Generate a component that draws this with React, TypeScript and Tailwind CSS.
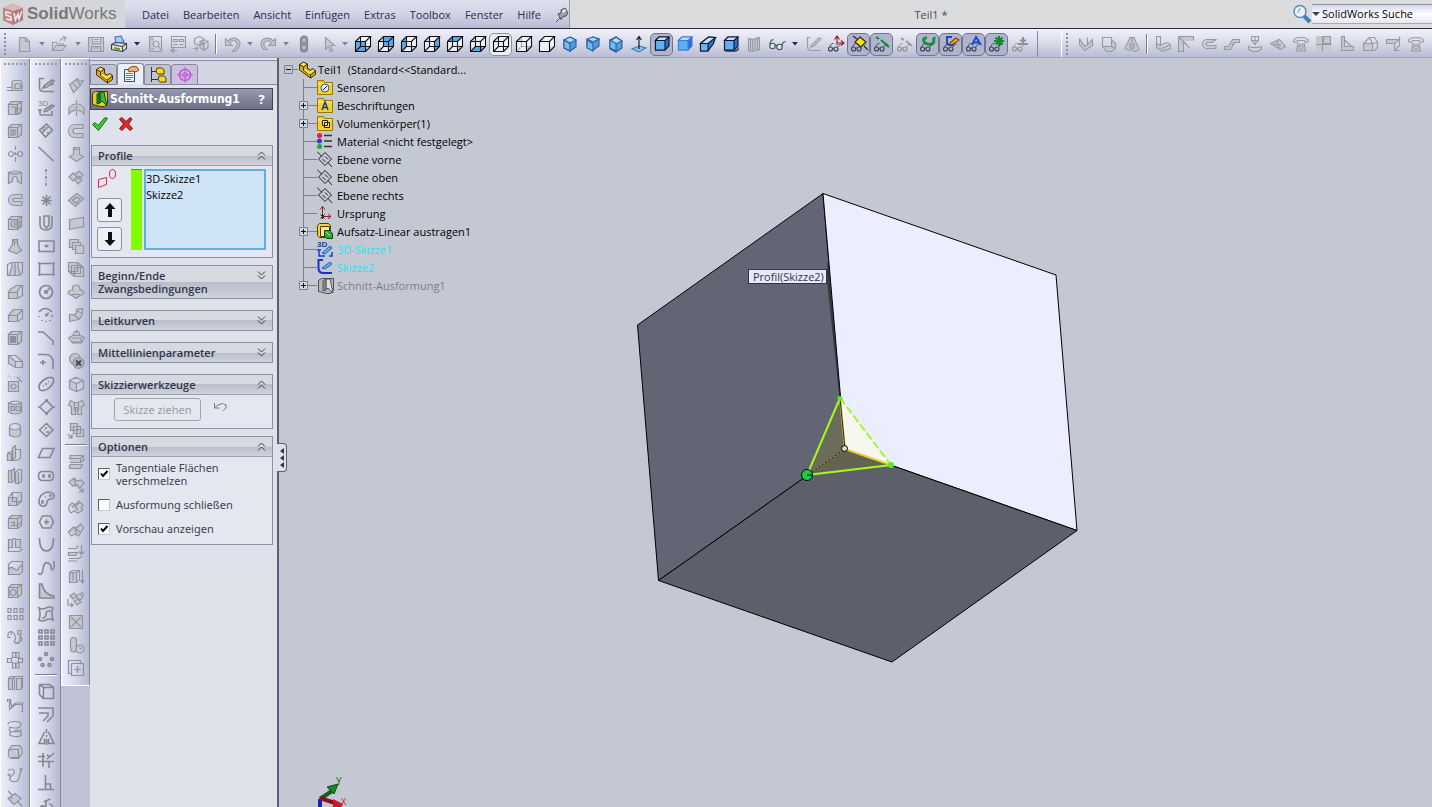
import { useState } from "react";
import type { ReactNode } from "react";
import clsx from "clsx";

type Tool = {
  label: string;
  icon?: ReactNode;
  line?: string;
  fill?: string;
  menu?: boolean;
  active?: boolean;
  framed?: boolean;
  enabled?: boolean;
};

type Item = Tool | "sep";

const BOX = "M2.5 5.5h9v10h-9zM2.5 5.5l3-3h10l-4 3M15.5 2.5v10l-4 3";
const BOX_FILL = "M2.5 5.5l3-3h10v10l-4 3h-9z";

function Glyph({ line, fill }: { line?: string; fill?: string }) {
  return (
    <svg viewBox="0 0 18 18" className="size-[18px] shrink-0" fill="none" stroke="currentColor" aria-hidden="true">
      {fill && <path d={fill} fill="#c6c8cf" stroke="none" />}
      {line && <path d={line} />}
    </svg>
  );
}

function Svg({ children }: { children: ReactNode }) {
  return (
    <svg viewBox="0 0 18 18" className="size-[18px] shrink-0" fill="none" stroke="currentColor" aria-hidden="true">
      {children}
    </svg>
  );
}

/* Wireframe cube, one face tinted */
function Wire({ face, hidden = "solid" }: { face?: string; hidden?: "solid" | "dash" | "none" }) {
  return (
    <Svg>
      <path d="M6.5 1.5h10v10h-10z" fill="#f4f5fc" stroke="none" />
      <path d="M1.5 6.5h10v10h-10z" fill="#eceef8" stroke="none" />
      {face && <path d={face} fill="#58aae8" stroke="none" />}
      {hidden !== "none" && (
        <path
          d="M6.5 1.5v10h10M6.5 11.5l-5 5"
          stroke={hidden === "dash" ? "#777" : "#111"}
          strokeDasharray={hidden === "dash" ? "1 1" : undefined}
        />
      )}
      <path d="M1.5 6.5h10v10h-10zM1.5 6.5l5-5h10l-5 5M16.5 1.5v10l-5 5" stroke="#111" />
    </Svg>
  );
}

function Iso({ tilt = 0 }: { tilt?: number }) {
  return (
    <Svg>
      <path d={`M9 2l6 ${3 - tilt}v7l-6 4-6-3V5z`} fill="#4f9ede" stroke="#2a5d9e" />
      <path d={`M9 2l6 ${3 - tilt}-6 3-6-3z`} fill="#a6daf7" stroke="#2a5d9e" />
      <path d="M9 8.5V16l-6-3V5z" fill="#78bcee" stroke="#2a5d9e" />
    </Svg>
  );
}

function Shaded({ edge, shadow }: { edge: string; shadow?: boolean }) {
  return (
    <Svg>
      {shadow && <path d="M2 15h11l4-3v3l-3 2H4z" fill="#555a70" stroke="none" />}
      <path d="M2.5 5.5L6 2h10v9l-4 4H2.5z" fill="#2f6fce" stroke={edge} />
      <path d="M2.5 5.5H12V15H2.5z" fill="#5fb0f2" stroke={edge} />
      <path d="M2.5 5.5L6 2h10l-4 3.5z" fill="#bfe4fb" stroke={edge} />
    </Svg>
  );
}

function Specs({ children, muted }: { children?: ReactNode; muted?: boolean }) {
  return (
    <Svg>
      {children}
      <g stroke={muted ? "#8d909c" : "#35454f"}>
        <circle cx="3.5" cy="14" r="2" />
        <circle cx="9" cy="14" r="2" />
        <path d="M5.5 13.5q.8-.8 1.500 0M2 12.500l3-4h1.500M10.500 12.500l2.500-3.500h1.500" strokeWidth=".9" />
      </g>
    </Svg>
  );
}

const standardTools: Item[] = [
  { label: "Neu", menu: true, line: "M4.5 2.5h6l4 4v10h-10zM10.5 2.5v4h4", fill: "M5 3h5l4 4v9H5z" },
  { label: "Öffnen", menu: true, line: "M1.5 15.5v-8h4l1 1.5h6v2M1.5 15.5l3.500-5h10l-3.500 5zM9 6q1-3 5-3M12 1l3 2-2 3", fill: "M2 15l3-4h9l-3 4z" },
  { label: "Speichern", line: "M1.5 2.5h15v14h-15zM5.5 2.5v6h8v-6M4.5 16.5v-5h9v5M7 13h5M7 4.5h5M7 6.5h5", fill: "M2 3h3v5h8V3h3v13H2z" },
  {
    label: "Drucken",
    menu: true,
    enabled: true,
    icon: (
      <Svg>
        <path d="M5 2l6-1 3 6-8 2z" fill="#9fd0f4" stroke="#3672b8" />
        <path d="M1.5 9.5l4-2 11 1v5l-4 3-11-2z" fill="#e2e2da" stroke="#3f4148" />
        <path d="M1.5 9.5l11 2 4-3M12.5 11.5v5" stroke="#3f4148" />
        <path d="M4 13l6 1.2" stroke="#6b9b38" strokeWidth="2" />
      </Svg>
    ),
  },
  { label: "Seitenansicht", line: "M3.5 1.5h12v15h-12zM10 6a3 3 0 1 0 .1 0M12 11l3 3.500M5 4h2M5 14h3", fill: "M4 2h4v14H4z" },
  { label: "Zeichnung aus Teil", line: "M2.5 1.5h14v11h-14zM4.5 4.5h4v2h-4zM10.5 4.5h4v2h-4zM4.5 9.5h4M10.5 9.5h4M2 15.5h6M5 13l-3 2.500L5 18" },
  { label: "Baugruppe aus Teil", line: "M2.5 3.5l5-2 4 2v5l-4 2-5-2zM8 6.5l4-2 4 2v6l-4 3-4-3zM8 6.5l4 2 4-2M12 8.5v7M1 13.5h5M4 11.5l2 2-2 3", fill: "M8 7l4 2v6l-4-3z" },
  "sep",
  { label: "Rückgängig", menu: true, line: "M2.500 4v6.500H9l-2.500-2.500Q9 5 12 6q4 2 1 6l-3.500 4.500h3L16 12q3-6-3-8.500Q8 2 5 6z", fill: "M2.500 4v6.500H9l-2.500-2.500Q9 5 12 6q4 2 1 6l-3.500 4.500h3L16 12q3-6-3-8.500Q8 2 5 6z" },
  { label: "Wiederherstellen", menu: true, line: "M16.500 4v6.500H10l2.500-2.500Q10 5 7 6q-4 2-1 6l2 2.500h-3L3 12q-3-6 3-8.500Q11 2 14 6z", fill: "M16.500 4v6.500H10l2.500-2.500Q10 5 7 6q-4 2-1 6l2 2.500h-3L3 12q-3-6 3-8.500Q11 2 14 6z" },
  {
    label: "Modellneuaufbau",
    icon: (
      <Svg>
        <rect x="5.500" y="1" width="7" height="16" rx="3.500" fill="#8f92a0" stroke="#80838f" />
        <circle cx="9" cy="5" r="1.700" fill="#b9bcc6" stroke="none" />
        <circle cx="9" cy="12.500" r="1.700" fill="#b9bcc6" stroke="none" />
      </Svg>
    ),
  },
  { label: "Auswählen", menu: true, line: "M7.5 2.5v12l3-3 2 5 2-1-2-5h4z", fill: "M8 4v9l3-2h4z" },
  { label: "Vorderseite", enabled: true, icon: <Wire face="M1.5 6.5h10v10h-10z" /> },
  { label: "Rückseite", enabled: true, icon: <Wire face="M6.5 1.5h10v10h-10z" /> },
  { label: "Links", enabled: true, icon: <Wire face="M1.5 6.5l5-5v10l-5 5z" /> },
  { label: "Rechts", enabled: true, icon: <Wire face="M11.5 6.5l5-5v10l-5 5z" /> },
  { label: "Oben", enabled: true, icon: <Wire face="M1.5 6.5l5-5h10l-5 5z" /> },
  { label: "Unten", enabled: true, icon: <Wire face="M1.5 16.5l5-5h10l-5 5z" /> },
  { label: "Drahtdarstellung", framed: true, enabled: true, icon: <Wire /> },
  { label: "Verdeckte Kanten sichtbar", enabled: true, icon: <Wire hidden="dash" /> },
  { label: "Verdeckte Kanten ausgeblendet", enabled: true, icon: <Wire hidden="none" /> },
  { label: "Isometrisch", enabled: true, icon: <Iso /> },
  { label: "Trimetrisch", enabled: true, icon: <Iso tilt={1} /> },
  { label: "Dimetrisch", enabled: true, icon: <Iso tilt={-1} /> },
  {
    label: "Normal auf",
    enabled: true,
    icon: (
      <Svg>
        <path d="M2 14l7-3 7 2-7 4z" fill="#86c3ea" stroke="#3d7ab5" />
        <path d="M9 14V2M6.5 5L9 1.5 11.5 5" stroke="#111" />
      </Svg>
    ),
  },
  { label: "Schattiert mit Kanten", active: true, enabled: true, icon: <Shaded edge="#0d1530" /> },
  { label: "Schattiert", enabled: true, icon: <Shaded edge="#3c78dc" /> },
  {
    label: "Perspektive",
    enabled: true,
    icon: (
      <Svg>
        <path d="M1.5 8.5l8-6.5 7 .5-2 6L9 16H1.5z" fill="#2f6fce" stroke="#0d1530" />
        <path d="M1.5 8.5H9V16H1.5z" fill="#6db6f3" stroke="#0d1530" />
        <path d="M1.5 8.5L9.5 2l7 .5L9 8.5z" fill="#bfe4fb" stroke="#0d1530" />
      </Svg>
    ),
  },
  { label: "Schatten", enabled: true, icon: <Shaded edge="#0d1530" shadow /> },
  { label: "Schnittansicht", line: "M3.5 3.5l4 1v12l-4-1zM7.5 4.5l7-2v12l-7 2M10 4v11M12.5 3.5v11M5.5 4v12", fill: "M3 3l5 1 6-2v12l-6 2-5-1z" },
  {
    label: "Einblenden/Ausblenden",
    menu: true,
    enabled: true,
    icon: (
      <Svg>
        <g stroke="#45535c">
          <circle cx="4.5" cy="11" r="2.700" fill="#dfe9ee" />
          <circle cx="11.5" cy="12" r="2.700" fill="#dfe9ee" />
          <path d="M7 10.500q1-.5 2 .5M2 10q0-5 3.500-5.500M14 11q0-4 3.500-4.500" />
        </g>
      </Svg>
    ),
  },
  { label: "Skizze", line: "M6 2.5H3.5v9q0 4 4 4H17M8 10l7-7 2 1-7 7-3 1z" },
  {
    label: "Ursprünge",
    enabled: true,
    icon: (
      <Specs>
        <path d="M10 10V2M7.5 4.5L10 1l2.500 3.500M10 8h7M14 5.5L17 8l-3 2.500" stroke="#9e1422" />
      </Specs>
    ),
  },
  {
    label: "Ebenen",
    active: true,
    enabled: true,
    icon: (
      <Specs>
        <path d="M10 2l6 5-5 5-6-5z" fill="#ffe600" stroke="#222" />
        <path d="M3 1l4 3M14 11l4 4" stroke="#222" />
      </Specs>
    ),
  },
  { label: "Achsen", active: true, enabled: true, icon: <Specs><path d="M3 2l3 2M8 5l8 7" stroke="#12882d" strokeWidth="2" /></Specs> },
  { label: "Temporäre Achsen", icon: <Specs muted><path d="M5 3l3 2M10 6l6 5" stroke="#999" strokeWidth="2" /></Specs> },
  { label: "Kurven", active: true, enabled: true, icon: <Specs><path d="M8 3q-5 0-3 3.500t7 2.500q4-1 2.500-4 0-2 2-2" stroke="#17963a" strokeWidth="3" /></Specs> },
  {
    label: "Skizzen",
    active: true,
    enabled: true,
    icon: (
      <Specs>
        <path d="M10 2H5v6q0 2 3 2h4" stroke="#1b48d8" strokeWidth="2" />
        <path d="M8 8l6-5 3 2-6 4-3 1z" fill="#ffb21f" stroke="#7a3c10" />
      </Specs>
    ),
  },
  { label: "Beschriftungen", active: true, enabled: true, icon: <Specs><path d="M7 10l4-8 5 8M9 7.5h6" stroke="#1b48d8" strokeWidth="2" /></Specs> },
  { label: "Punkte", active: true, enabled: true, icon: <Specs><path d="M11 1v10M6 6h10M7.5 2.5l7 7M14.5 2.5l-7 7" stroke="#0b8f22" strokeWidth="2" /></Specs> },
  { label: "Beziehungen", icon: <Specs muted><path d="M7 9h10M12 9V2M9 5.5h6" stroke="#8d909c" strokeWidth="2" /></Specs> },
];

const sheetTools: Item[] = [
  { label: "Basisblech", line: "M2.5 3.5l5 8 3-2V2.5M2.5 3.5v6l5 6 8-5v-6l-5 5", fill: "M3 4l5 8 7-6v5l-7 5-5-6z" },
  { label: "In Blech umwandeln", line: "M2.5 2.5h9v9h-9zM11.5 4.5l4 4v5l-4 3h-5l-4-5M11.5 11.5l4 2", fill: "M3 12h8V5l4 4v4l-4 3H7z" },
  { label: "Übergangslasche", line: "M7 2.5h4l5 12-4 2-3-2-3 1-4-2zM9 2.5v12M7 8v6M11 8v6", fill: "M7 3h4l4 11H3z" },
  "sep",
  { label: "Kante-Lasche", line: "M2.5 1.5h4v9l-4-2zM2.5 8.5v4l6 4 8-3v-4l-4-2-6 3M7 14l8-4", fill: "M3 9l5 3 8-2v3l-8 3-5-3z" },
  { label: "Gehrung", line: "M1.5 1.5h15v4M1.5 1.5v15h5V7l6 6M1.5 1.5l9 9", fill: "M2 2h14v4H6v10H2z" },
  { label: "Saum", line: "M16 4.5H7a4 4 0 0 0 0 9h9v-3H7.5a1 1 0 0 1 0-3H12l4-3z", fill: "M7 5h9l-4 3H7v2h9v3H7q-5-4 0-8z" },
  { label: "Absatz", line: "M1.5 14.5h6l4-7h5v-3h-7l-4 7h-4zM9 10l3-3", fill: "M2 12h4l3-7h7v2h-5l-4 7H2z" },
  { label: "Skizzierte Biegung", line: "M5.5 1.5h7v4L9 9.5 5.5 5.5zM9 1v8M2.5 11.5l4 1h5l4-1v3l-4 2h-5l-4-2zM5.5 5.5h7" },
  { label: "Eckbehandlung", line: "M1.5 8.5l9-4 6 7-5 3zM4 9l8 1M8 6l2 7", fill: "M2 9l9-4 5 6-5 3z" },
  { label: "Umformen", line: "M1.500 6.5q0-4 7.500-4t7.500 4l-3 1-1-2h-7l-1 2zM6 8l-1.500 8h9L12 8M9 10a2 2 0 1 0 .1 0", fill: "M4 15l2-7h6l2 8z" },
  { label: "Entfaltet", line: "M7.500 1.5v15M1.5 9.5h15M8.5 1.5h7v7h-7z", fill: "M1 1h15v15H1z" },
  { label: "Verstärkung", line: "M3.5 1.5h3v10h9v4h-12zM6.5 5l7 6.500", fill: "M4 2h2v9h9v4H4z" },
  { label: "Falten", line: "M2.5 8.5l6-6h5l3 5v5l-3 3h-11zM2.5 8.5h9l5-1M8.5 2.5l3 6v7", fill: "M3 9h8v6H3z" },
  { label: "Abwickeln", line: "M2.5 4.5h13l-5 4h-8zM10.5 8.5v7l5-5v-9M10.5 15.5h5", fill: "M3 5h12l-5 3H3z" },
  { label: "Entlüftung", line: "M1.500 6.5q0-4 7.500-4t7.500 4l-3 1-1-2h-7l-1 2zM6 8l-1.500 8h9L12 8M9 10a2 2 0 1 0 .1 0", fill: "M4 15l2-7h6l2 8z" },
];

const featureTools: Item[] = [
  { label: "Linear ausgetragener Aufsatz", line: "M6 14.5v-7q0-3 3-3h4q3 0 3 3v7zM1 11.5h5M1 14.5h5M9 11.5q-1-4 3-4t2 5h-5z", fill: "M7 14V7q3-3 8 0v7z" },
  { label: "Linear ausgetragener Schnitt", line: BOX + "M5 8h5v5M9.5 9.5h5v5h-5z", fill: BOX_FILL },
  { label: "Schnitt", line: BOX + "M5 8h4v5H5zM7 8v5", fill: BOX_FILL },
  { label: "Rotierter Aufsatz", line: "M9.5 1v4M9.5 7v3M9.5 12v5M5 6.5a2.500 2.500 0 1 0 .1 0M14 6.5a2.500 2.500 0 1 0 .1 0M7 9h5" },
  { label: "Rotierter Schnitt", line: "M2.5 4.5q7-3 13 0v11l-4-2q0-5-2.500-5t-2.500 5l-4 2zM2.5 4.5q6 3 13 0", fill: "M3 5q7-3 12 0v10l-4-2q-2-9-4 0l-4 2z" },
  { label: "Ausgetragener Aufsatz", line: "M16 3.5H8a5.500 5.500 0 0 0 0 11h8v-4H8.5a1.500 1.500 0 0 1 0-3H16z", fill: "M8 4h8v3H8v4h8v3H8Q-1 9 8 4z" },
  { label: "Ausgetragener Schnitt", line: BOX + "M14 7H8a3 3 0 0 0 0 6h6v-2H9q-2-1 0-2h5z", fill: BOX_FILL },
  { label: "Aufsatz ausformen", line: "M6.5 2.5h5v5l4 6-5 3-8-3 4-6zM6.5 2.5l2 2h3M8.5 4.5v4", fill: "M7 3h4v5l4 6-5 2-7-3 4-5z" },
  { label: "Schnitt ausformen", line: "M1.5 4.5l4-2h11v10l-3 3h-12zM6 3v4l-3 8M12 3v4l2 8M9 3v12", fill: "M9 3l3 4 1 8H2l4-8z" },
  { label: "Verrundung", line: "M2.5 15.5v-6q1-4 5-5l3-2h6v10l-5 3zM11.5 15.5v-6h-9M11.5 9.5q0-4 5-7", fill: "M3 9q1-6 13-6l-5 6v6H3z" },
  { label: "Fase", line: "M2.5 15.5v-6l5-6h9v9l-5 3zM11.5 15.5v-6h-9M11.5 9.5l5-6", fill: "M3 9l5-5h8l-5 5v6H3z" },
  {
    label: "Wandung",
    icon: (
      <Svg>
        <path d={BOX_FILL} fill="#c6c8cf" />
        <path d={BOX} />
        <path d="M4.5 7.5h5v6h-5z" fill="#8d9099" />
      </Svg>
    ),
  },
  { label: "Formschräge", line: "M2.5 3.5h7l7 6v6h-7l-7-4zM2.5 3.5l7 6h7M9.5 9.5v6", fill: "M3 4l7 6v5l-7-4z" },
  { label: "Bohrungsassistent", line: "M2.5 6.5h10v10h-10zM7.5 9a2.500 2.500 0 1 0 .1 0M11 2l5 5M4 3h1M8 2h1M14 2h1M2 1h1", fill: "M3 7h9v9H3z" },
  { label: "Wickeln", line: "M2.5 5q7-4 13 0v9q-6 4-13 0zM2.5 5q7 3 13 0M5 8.5h3v4H5zM10 8.5h4v4h-4z", fill: "M3 5q6 3 12 0v9q-6 3-12 0z" },
  { label: "Kuppel", line: "M3.5 7q0-4.500 5.500-4.500t5.500 4.500v7q-5.500 4-11 0zM3.5 7q5.500 4 11 0", fill: "M4 8q5 3 10 0v6q-5 3-10 0z" },
  { label: "Rippe", line: "M1.5 9.5h4v7h-4zM6.5 3.5l3-2v12l-3 3zM9.5 5.5h5v9l-4 2h-4M1.5 9.5l3-2h2", fill: "M7 4l3-2v11l-3 3zM2 10h3v6H2z" },
  { label: "Verschieben", line: "M2.5 3.5h3v12h-3zM5.5 3.5l3-2v12l-3 2M9.5 5.5l3-3h3v12l-3 2h-3zM12.5 5.5v11", fill: "M3 4l5-2v11l-5 2zM10 6h3v10h-3z" },
  { label: "Kombinieren", line: "M2.5 7.5h8v8h-8zM6.5 2.5h9v9h-9zM2.5 7.5l4-5M10.5 15.5l5-4", fill: "M3 8h8V3h4v8l-5 5H3z" },
  { label: "Einzug", line: BOX + "M5 9.5h4M5 12.5h6l4-3M8 8v5", fill: BOX_FILL },
  { label: "Biegen", line: "M2.5 3.5h4v8h-4zM9.5 3.5h5v8h-5zM2.5 11.5v4h11l3-3M6.5 3.5l1-1h2", fill: "M3 4h3v8H3zM10 4h4v8h-4z" },
  { label: "Trennen", line: "M2.5 5.5l3-3h11v10l-3 3h-11zM2.5 10q3-3 6 0t5-2l3-2", fill: "M3 10q3-2 6 0t7-3v5l-3 3H3z" },
  { label: "Vertiefung", line: BOX + "M7 7.5a3 3 0 1 0 .1 0", fill: BOX_FILL },
  { label: "Lineares Muster", line: "M2 3.5h3v4H2zM8 3.5h3v4H8zM14 3.5h3v4h-3zM2 10.5h3v4H2zM8 10.5h3v4H8zM14 10.5h3v4h-3z" },
  { label: "Kurvengesteuertes Muster", line: "M2 5.5q3-4 6 0t0 8M2 5.5v4h3M8 13.5q4 4 6 0V7M12 2.5h3v4h-3zM15 8.5q3 5-4 6M5 3v4" },
  { label: "Kreismuster", line: "M6.5 1.5h3v5h-3zM10 1.5h3v5h-3zM1.5 7.5h4v4h-4zM12.5 7.5h4v4h-4zM6.5 12h3v5h-3zM10 12h3v5h-3z" },
  { label: "Spiegeln", line: "M2.5 4.5h4v11h-4zM8.5 2.5v14M10.5 4.5h5v11h-5zM2.5 4.5l2-2h12v11l-2 2M6.5 4.5l2-2", fill: "M3 5h3v10H3zM11 5h4v10h-4z" },
  { label: "Zusammengesetzte Kurve", line: "M1.500 5V2.5h2v10l6-5h7v7M1.500 2.500h3l1 7 4-3.500h7v3M15 14.500h2" },
  { label: "Spirale", line: "M2 4.5q0-3 7-3t6 3.500-6 3-6-1M4 8q-3 4 5 4t6-3M5 12q-4 4 4 4.500t6-3.500-7-2" },
  { label: "Trennlinie", line: "M2.5 7.5l3-5h8q3 3 3 7l-4 6h-8l-2-3zM5.5 6.5h7v8h-7M2.5 7.5l3-1", fill: "M3 8l3-5h7l3 6-4 6H5z" },
  { label: "Kurve durch Punkte", line: "M2 4.5q5-3 6 0t-3 6 2 5q5 1 6-4t3-8M15 2.5a1 1 0 1 0 .1 0M3 8a1 1 0 1 0 .1 0" },
  { label: "Referenzebene", line: "M2 9.5l7-5 6 5-7 6zM2 2l4 4M12 13l4 4M4 9h3", fill: "M3 10l6-5 5 4-6 6z" },
];

const sketchTools: Item[] = [
  { label: "Skizze", line: "M7 2.5H2.5v9q0 4 4 4H17M7 10l8-6 2 1-7 6-4 1zM13 9l4-1" },
  {
    label: "3D-Skizze",
    icon: (
      <Svg>
        <text x="1" y="7" fontSize="8" fill="currentColor" stroke="none" className="font-[Liberation_Sans]">3D</text>
        <path d="M7 11l8-5 2 1-7 5-4 1M1 11h4M3 11v5M3 16h12v-4" />
      </Svg>
    ),
  },
  { label: "Intelligente Bemaßung", line: "M2.5 8l7-6 6 6-7 7zM5 11l7-7M5 6l2 2M10 10l2 2M7 4l1 2" },
  { label: "Linie", line: "M1.500 2l15 14" },
  { label: "Mittellinie", line: "M9 1v3M9 5.5v1M9 8v3M9 12.5v1M9 15v3" },
  { label: "Punkt", line: "M9.5 4v11M4 9.5h11M5.5 5.5l8 8M13.5 5.5l-8 8" },
  { label: "Offset", line: "M3 2v8q0 6 6 6t6-6V2M7 2h5v9l-2.500 3L7 11z" },
  { label: "Mittelpunkt-Rechteck", line: "M2 4h15v10.500H2zM8.5 8.5h2v1h-2z" },
  { label: "Eckpunkt-Rechteck", line: "M2.5 3.5h14v11h-14zM1 3h2M16 3h2M1 15h2M16 15h2" },
  { label: "Kreis", line: "M9 2.5a6.500 6.500 0 1 0 .1 0M9 9l4-4M8 8h2v2H8z" },
  { label: "Bogen", line: "M2 6q6-7 13 0M9 9l3-2M8 8.5h2v1H8M15 9v2M13 14v1M9 15v1M5 14v1M2 10v1" },
  { label: "Skizzenfase", line: "M1 3h5l10 9v4" },
  { label: "Skizzenverrundung", line: "M1 2.5h7q8 0 8 8V17M3 10.5h6M6 8v5" },
  { label: "Ellipse", line: "M3 15q-3-5 3-9.500t10-2.500q2 4-3 9t-10 3zM9 8v2M6 11h1M11 7h1" },
  { label: "Polygon", line: "M2.500 9l7-6.500L16 9l-6.500 6.500zM8 2h3M8 16h3M1 9h2M16 9h2" },
  { label: "3-Punkt-Rechteck", line: "M2.500 9l7-6.500L16 9l-6.500 6.500zM8 7h2M9 11h3M7 9h1" },
  { label: "Parallelogramm", line: "M5.5 4.5h11.500l-4 9H1.500z" },
  { label: "Langloch", line: "M5.5 4.5h7q4 0 4 4.500t-4 4.500h-7q-4 0-4-4.500t4-4.500zM6 8h1v2H6zM12 8h1v2h-1z" },
  { label: "Bogenlangloch", line: "M2 12Q2 4 10 2q6 0 7 3t-3 4q-4 0-4 4-1 4-5 3-3-1-3-4zM5 11h1v2H5zM8 7h1M13 5h1v1h-1z" },
  { label: "Sechseck", line: "M5.500 3h8l3 6-3 6h-8l-3-6zM7 9h5M9.5 6.5v5" },
  { label: "Parabel", line: "M2.5 2q0 13 7 13t7-13" },
  { label: "Spline", line: "M1 14q4 4 5-4t5-6 3 5q1 4 3 0V2" },
  { label: "Freiform", line: "M2.5 2v14H17v-2q-10-1-12-12z", fill: "M3 2h2q1 10 12 12v2H3z" },
  { label: "Spline auf Oberfläche", line: "M2 3q4 2 7 0t7 0q-2 5 0 12-4-2-7 0t-7 0q2-6 0-12zM5 13q4 0 4-4t5-3" },
  { label: "Lineares Skizzenmuster", line: "M2 2h3v3H2zM8 2h3v3H8zM14 2h3v3h-3zM2 8h3v3H2zM8 8h3v3H8zM14 8h3v3h-3zM2 14h3v3H2zM8 14h3v3H8zM14 14h3v3h-3z" },
  { label: "Kreisförmiges Skizzenmuster", line: "M9 1.5a1.500 1.500 0 1 0 .1 0M3 6.5a1.500 1.500 0 1 0 .1 0M15 6.5a1.500 1.500 0 1 0 .1 0M5.5 12.5a1.500 1.500 0 1 0 .1 0M12.5 12.5a1.500 1.500 0 1 0 .1 0" },
  "sep",
  { label: "Elemente übernehmen", line: "M2.5 2.5h10l4 3v11h-10l-4-4zM2.5 2.5l4 3h10M6.5 5.5v11" },
  { label: "Offset Elemente", line: "M1 3h15v8l-6 6M2 8h9v3l-5 5" },
  { label: "Elemente spiegeln", line: "M9.5 1v4M9.5 7v2M9.5 11v6M7.5 4L2 15.5h5.500v-5M11.5 4L17 15.5h-5.500v-5" },
  { label: "Elemente trimmen", line: "M1 5.5h7M1 10.5h16M6 2v14M10 8l7-6M10 4l3 2M12 10v7" },
  { label: "Beziehung hinzufügen", line: "M8.500 1v15M1 15.5h16M9 10h4.500v5" },
  { label: "Schnelle Skizze", line: "M4 14q-2-6 3-5v7M9 3v12M12 7q5 0 3 8M7 5l6-3" },
];

const surfaceTools: Item[] = [
  { label: "Linear ausgetragene Oberfläche", line: "M2.5 8.5l8-6 2 3 4-1-3 5-7 7zM6 7l4 5M9 4l4 5", fill: "M3 9l7-6 5 2-2 5-7 5z" },
  { label: "Rotierte Oberfläche", line: "M9.5 1v4M9.5 7v3M9.5 12v5M2 9q3-4 7.500-4T17 9v6q-3-4-7.500-4T2 15z", fill: "M2 9q8-7 15 0v6q-7-6-15 0z" },
  { label: "Ausgetragene Oberfläche", line: "M16 2.5H8a6 6 0 0 0 0 13h8v-4H8.5a2 2 0 0 1 0-5H16z", fill: "M8 3h8v3H8q-3 3 0 6h8v3H8Q-2 9 8 3z" },
  { label: "Ausgeformte Oberfläche", line: "M6.5 2.5h6v7l4 2-7 5-7-5 4-2zM6.5 2.5l2 2h4", fill: "M7 3h5v7l4 2-6 4-7-4 4-2z" },
  { label: "Begrenzungsoberfläche", line: "M2 9l4-4 4 4-4 4zM8 7l4-4 4 4-4 4zM8 11l4-3 3 4-4 4z", fill: "M2 9l4-4 6-2 4 5-4 7-6-2z" },
  { label: "Gefüllte Oberfläche", line: "M1.5 9.5l8-7 7 5-8 8zM5.5 9.5l4-3.500 3.500 2-4 4.500z", fill: "M2 9l8-7 6 6-8 7z" },
  { label: "Planare Oberfläche", line: "M2.5 5.5l14-2v9l-14 3z", fill: "M3 6l13-2v8L3 15z" },
  { label: "Offset-Oberfläche", line: "M2.5 2.5h9v3M2.5 2.5v8h3M5.5 5.5h8v3M5.5 5.5v7h3M8.5 8.5h8v8h-8z", fill: "M3 3h8v3h3v3h2v7H9v-3H6v-3H3z" },
  { label: "Regeloberfläche", line: "M1.5 2.5h9v9h-9zM4.5 5.5h9v8h-9zM7.5 7.5h9v9h-9zM10.5 2.5l6 5M1.5 11.5l6 5", fill: "M2 3h8l6 5v8H8l-6-5z" },
  { label: "Verlängern", line: "M5.5 5q0-3 3.500-3t4 3v2q4 1 4 2.500t-4 3l-4 3-4-3Q1 11 1 9.5T5.5 7zM5 11.5h8", fill: "M5 3h8v5l4 2-8 6-8-6 4-2z" },
  { label: "Fläche ersetzen", line: "M2.5 8.5h5q3-1 2-5l6-1q1 7-4 11l-9 2zM7 9l5 4M10 5l5 2", fill: "M3 9q8 0 7-6h5q0 11-12 12z" },
  { label: "Oberfläche verrunden", line: "M1.5 9l5-3q0-4 3-4t3 4l5 3-3 5h-9zM6 6.5h7M5 9h9v4H5M9.5 1v3", fill: "M2 9l8-7 6 7-2 4H5z" },
  {
    label: "Fläche löschen",
    icon: (
      <Svg>
        <circle cx="8" cy="7" r="5.500" fill="#c3c6d0" />
        <circle cx="11.5" cy="11" r="5.500" fill="#b1b4c0" />
        <path d="M9 8.5l5 5M14 8.5l-5 5" stroke="#474a56" strokeWidth="2" />
      </Svg>
    ),
  },
  { label: "Zusammenfügen", line: "M2.5 5.5l6-3 8 3v8l-7 3-7-3zM2.5 5.5l7 3 7-3M9.5 8.5v8M7 4l4-1", fill: "M3 6l6 3v7l-6-3z" },
  { label: "Aufdicken", line: "M3.5 2.5l4 2h4l4-2 2 5-3 1v8h-4v-7h-2v7h-4v-8l-3-1zM7.5 4.5v8M11.5 4.5v8", fill: "M3 3l5 2h3l4-2v13H4z" },
  { label: "Verschieben/Kopieren", line: "M3.5 2.5h7v7h-7zM6.5 5.5h7v7h-7zM9.5 8.5h7v7h-7zM1 13l4 4M5 13v4H1", fill: "M10 9h6v6h-6zM4 3h6v6H4z" },
  "sep",
  { label: "Trennlinien", line: "M3.5 3.5h12l-2 3h-11zM2.5 6.5h11v3l3-1v-5M3.5 12.5h12l-2 4h-11v-3zM3 10.5h12", fill: "M3 4h12v4l-3 2H3zM3 12h12v4H3z" },
  { label: "Trennfuge", line: "M2 7l5-4 3 3 4-1 3 3-4 5-3-3-4 1zM12 13l4 4M16 13v4h-4M7 3l2 8", fill: "M3 7l4-3 9 4-4 5-7-2z" },
  { label: "Absperrflächen", line: "M2 8l3-3 3 2 4-4 4 4-2 3 2 2-5 3-4-2-3 2-2-3zM8 7l3 6M5 9l8-4", fill: "M3 8l9-5 3 7-7 4z" },
  { label: "Trennoberflächen", line: "M1.5 11l5-5 3 1 4-4 3 4-5 8-4-2-3 2zM7 6l3 7M9 8l4 3", fill: "M2 11l5-5 6-3 3 4-5 7z" },
  { label: "Kern/Formnest", line: "M1 4.5h8l2-3M14.5 1v9M12 7.5l2.500 3L17 7.5M1.5 8.5h9l-2 3h-7zM2 14.5h10l3-2M1 17h9", fill: "M2 9h8l-2 3H2z" },
  { label: "Skalieren", line: "M2.5 5.5l3-2h7v9l-3 3h-7zM2.5 5.5h7l3-2M9.5 5.5v10M6 5v9M15.5 3v13M13.5 13l2 3 2-3", fill: "M3 6h7v9H3z" },
  { label: "Formteilung", line: "M3 6l4-3 3 3-4 3zM9 6l4-2 3 3-3 3zM7 11l4-2 3 3-4 3zM1 9v6h5M4 13l2 2-2 2M14 2l3 3", fill: "M3 6l4-3 3 3-4 3zM7 11l4-2 3 3-4 3z" },
  { label: "Unterstützung löschen", line: "M2.5 2.5h13v13h-13zM4 4l10 10M14 4L4 14", fill: "M3 3h12v12H3z" },
  { label: "Zeitmodell", line: "M3.5 5q0-3.500 3-3.500t3 3.500v7q0 4-3 4t-3-4zM13 9a4 4 0 1 0 .1 0M13 11v2h2", fill: "M4 2h5v14H4z" },
  { label: "Einfügen", line: "M4.500 14.500h-3v-13h12v3M4.500 4.5h12v12h-12zM7 10.5h7M10.5 7v7" },
];

function ToolButton({ tool }: { tool: Tool }) {
  return (
    <>
      <button
        type="button"
        aria-label={tool.label}
        className={clsx(
          "flex h-[23px] w-[23px] shrink-0 items-center justify-center rounded-[5px]",
          tool.active && "border border-[#70748e] bg-[#b0b4cd]",
          tool.framed && "border border-[#8b8e9e] bg-[#eceef8]"
        )}
      >
        {tool.icon ?? <Glyph line={tool.line} fill={tool.fill} />}
      </button>
      {tool.menu && (
        <button
          type="button"
          aria-label={tool.label + " Optionen"}
          className={clsx("flex h-[23px] w-[13px] shrink-0 items-center justify-center", tool.enabled ? "text-[#24283c]" : "text-[#7f8396]")}
        >
          <svg viewBox="0 0 6 4" className="h-[4px] w-[6px]" fill="currentColor" aria-hidden="true">
            <path d="M0 0h6L3 3.5z" />
          </svg>
        </button>
      )}
    </>
  );
}

function SideBar({ items, name, className }: { items: Item[]; name: string; className: string }) {
  return (
    <div
      role="toolbar"
      aria-label={name}
      className={clsx(
        "flex shrink-0 flex-col items-center overflow-hidden border-t border-r border-l border-t-white border-r-[#858aa3] border-l-white bg-linear-to-r from-[#eceef9] via-[#d6d9ea] to-[#b5bad2]",
        className
      )}
    >
      <div className="mt-1 mb-2 w-[22px] shrink-0 border-t-2 border-dotted border-[#9599ae]" />
      {items.map((item, i) =>
        item === "sep" ? (
          <div key={i} className="my-[3px] h-[2px] w-[22px] shrink-0 border-t border-b border-t-[#787c92] border-b-white" />
        ) : (
          <ToolButton key={i} tool={item} />
        )
      )}
    </div>
  );
}

function HBar({ items, name }: { items: Item[]; name: string }) {
  return (
    <div role="toolbar" aria-label={name} className="flex shrink-0 items-center stroke-[1.1] text-[#9799a5]">
      <div className="mx-1 h-[22px] border-l-2 border-dotted border-[#8b8fa5]" />
      <div className="w-[2px]" />
      {items.map((item, i) =>
        item === "sep" ? (
          <div key={i} className="mx-[3px] h-[20px] w-[2px] shrink-0 border-r border-l border-r-white border-l-[#787c92]" />
        ) : (
          <ToolButton key={i} tool={item} />
        )
      )}
    </div>
  );
}

const menus = ["Datei", "Bearbeiten", "Ansicht", "Einfügen", "Extras", "Toolbox", "Fenster", "Hilfe"];

function TitleBar() {
  return (
    <header className="flex h-[29px] shrink-0 border-b border-[#25253a] bg-[#dbdcde]">
      <div className="flex w-[125px] shrink-0 items-center gap-1 bg-[#d5d6d9] pl-[3px]">
        <svg viewBox="0 0 20 22" className="h-[22px] w-[20px]" aria-hidden="true">
          <path d="M0 5l10-4 10 4v12l-10 5-10-5z" fill="#b5787c" />
          <path d="M0 5l10-4 10 4-10 3z" fill="#d8b9ba" />
          <path d="M0 5l10 3v14L0 17z" fill="#c48589" />
          <path d="M8 10L3 9v3l5 2v3l-5-1M11 10l1.500 7 2.500-6 1 5 3-8" fill="none" stroke="#f3eeee" strokeWidth="1.500" />
        </svg>
        <div className="font-['Liberation_Sans',sans-serif] text-[17px] leading-5 text-[#77797c]">
          <span className="font-bold">Solid</span>Works
        </div>
      </div>
      <nav className="flex w-[445px] shrink-0 items-center gap-[14px] border-r border-[#9a9cae] bg-linear-to-b from-[#e0e1f0] via-[#d2d3e4] to-[#b9bbd3] pt-[2px] pl-[17px] text-[#2c2d52]">
        {menus.map((m) => (
          <button key={m} type="button" className="leading-4">
            {m}
          </button>
        ))}
        <svg viewBox="0 0 14 16" className="h-4 w-[14px]" aria-label="Anheften">
          <path d="M1 15l5-5" stroke="#555" />
          <path d="M3 7l3-1V3l4-2 3 5-2 3-3 .5-2 3z" fill="#9fa1a8" stroke="#4a4c55" />
          <path d="M7 4l3-2 1 2-3 2z" fill="#f2f2f4" />
        </svg>
      </nav>
      <h1 className="flex flex-1 items-center justify-center pt-[2px] text-[#4b4c52]">Teil1 *</h1>
      <label className="flex w-[140px] shrink-0 items-center self-center">
        <svg viewBox="0 0 20 20" className="size-5 shrink-0" aria-hidden="true">
          <path d="M12 12l6 6" stroke="#3c7fc0" strokeWidth="4" />
          <circle cx="8" cy="7.5" r="6" fill="#e6f3fb" stroke="#5f8daf" strokeWidth="1.500" />
          <path d="M6 9l2-5" stroke="#aab" strokeWidth="1.500" />
        </svg>
        <span className="flex h-[20px] flex-1 items-center gap-[2px] border-t border-b border-t-[#8f90a6] border-b-[#a9aab9] bg-linear-to-b from-[#d4d5e6] via-white to-[#e4e5f0]">
          <svg viewBox="0 0 8 5" className="h-[5px] w-2 shrink-0" aria-hidden="true">
            <path d="M0 0h8L4 4z" fill="#3d3c66" />
          </svg>
          <input aria-label="SolidWorks Suche" defaultValue="SolidWorks Suche" className="w-full min-w-0 bg-transparent text-black outline-none" />
        </span>
      </label>
    </header>
  );
}

function Chevrons({ open }: { open?: boolean }) {
  return (
    <svg viewBox="0 0 9 9" className={clsx("size-[9px] shrink-0", !open && "rotate-180")} fill="none" stroke="#3c3e4b" aria-hidden="true">
      <path d="M1 4.5L4.5 1 8 4.5M1 8.5L4.5 5 8 8.5" />
    </svg>
  );
}

function Group({ title, children }: { title: ReactNode; children?: ReactNode }) {
  const [open, setOpen] = useState(!!children);
  return (
    <section className={clsx("border border-[#8d90a6] bg-[#e5e7f0]", open ? "mb-[7px]" : "mb-[11px]")}>
      <button
        type="button"
        aria-expanded={open}
        onClick={() => setOpen(!open)}
        className={clsx(
          "flex w-full items-start justify-between bg-linear-to-b from-[#d6d9e0] from-50% via-[#b8bdca] via-50% to-[#cfd3dd] px-1.5 py-[3px] text-left font-['Open_Sans',sans-serif] leading-[13px] font-semibold text-[#33354a]",
          children && open && "border-b border-[#9ea1b4]"
        )}
      >
        <span>{title}</span>
        <span className="flex h-[13px] items-center">
          <Chevrons open={open} />
        </span>
      </button>
      {open && children}
    </section>
  );
}

function Check({ label, on }: { label: ReactNode; on?: boolean }) {
  return (
    <label className="flex items-center gap-1.5">
      <span className="grid shrink-0">
        <input
          type="checkbox"
          defaultChecked={on}
          className="peer col-start-1 row-start-1 size-3 appearance-none border border-t-[#5e606c] border-r-[#c9cad2] border-b-[#c9cad2] border-l-[#5e606c] bg-white"
        />
        <svg viewBox="0 0 12 12" className="pointer-events-none col-start-1 row-start-1 hidden size-3 peer-checked:block" fill="none" stroke="#000" strokeWidth="2" aria-hidden="true">
          <path d="M3 5.5L5 8l4.500-5" />
        </svg>
      </span>
      <span>{label}</span>
    </label>
  );
}

function PartIcon() {
  return (
    <svg viewBox="0 0 18 18" className="size-[18px] shrink-0" stroke="#3f3000" aria-hidden="true">
      <path d="M1.500 3.500l4-2.500 4 2v4.500l3 1.500 2-1.500 3 2v4l-5 3.500-11-8z" fill="#dcae12" />
      <path d="M1.500 3.500l4 2.500 4-3M5.500 6v3.500l7 4.500 5-4M12.500 14v3" fill="none" />
      <path d="M3 3.500L5.500 2l2.500 1-2.500 1.700z" fill="#fff3a0" stroke="none" />
      <path d="M6.500 8.500l5 3.500 4-2.500" fill="none" stroke="#ffe85a" strokeWidth="2" />
    </svg>
  );
}

function LoftIcon({ muted }: { muted?: boolean }) {
  return (
    <svg viewBox="0 0 18 18" className="size-[18px] shrink-0" aria-hidden="true">
      <path d="M1.5 3.5l3-2h12v12l-3 3h-4l-4-1-4-1z" fill={muted ? "#b4b6bd" : "#e8cb26"} stroke={muted ? "#4c4e55" : "#453a00"} />
      <path d="M9 2h4l3 14-5-5-2 2z" fill={muted ? "#e2e3e8" : "#3fb53b"} stroke={muted ? "#55575e" : "#0b5514"} />
      <path d="M9 2L6 4v10l3-1z" fill={muted ? "#8c8e96" : "#1d7d26"} stroke={muted ? "#55575e" : "#0b5514"} />
    </svg>
  );
}

const tabs = [
  { label: "FeatureManager", icon: <PartIcon /> },
  {
    label: "PropertyManager",
    icon: (
      <svg viewBox="0 0 18 18" className="size-[18px]" aria-hidden="true">
        <path d="M2.5 4.5h10v12h-10z" fill="#eef6ff" stroke="#26517f" />
        <path d="M4 8.5h7M4 10.5h7M4 12.5h7M4 14.5h5" stroke="#4c8bc8" />
        <path d="M7 3q4-3 8-1l2 3-3 2-4-1-3 1-1-2z" fill="#f3b06f" stroke="#84501f" />
      </svg>
    ),
  },
  {
    label: "ConfigurationManager",
    icon: (
      <svg viewBox="0 0 18 18" className="size-[18px]" aria-hidden="true">
        <path d="M2.5 1v15M2.5 5.5h5M2.5 13.5h7" stroke="#333" />
        <path d="M8 2h5l2 2v4H9L7 6z" fill="#ffd91e" stroke="#4d3c00" />
        <path d="M10 10h5l2 2v4h-6l-2-2z" fill="#ffd91e" stroke="#4d3c00" />
      </svg>
    ),
  },
  {
    label: "DimXpertManager",
    icon: (
      <svg viewBox="0 0 18 18" className="size-[18px]" fill="none" stroke="#c455d6" aria-hidden="true">
        <circle cx="9" cy="9" r="5.500" strokeWidth="1.500" />
        <circle cx="9" cy="9" r="2.500" />
        <path d="M9 1v16M1 9h16" />
      </svg>
    ),
  },
];

function PropertyPanel() {
  return (
    <aside className="flex w-[189px] shrink-0 flex-col border-r-2 border-[#5c5f73] bg-[#e0e2eb]">
      <div role="tablist" className="mt-[2px] flex h-[25px] shrink-0 items-end border-t border-[#8d90a6] bg-[#d3d6e2]">
        {tabs.map((t, i) => (
          <button
            key={t.label}
            type="button"
            role="tab"
            aria-label={t.label}
            aria-selected={i === 1}
            className={clsx(
              "flex w-[27px] items-center justify-center rounded-t-[3px] border border-[#868a9e]",
              i === 1 ? "h-[22px] border-b-[#e0e2eb] bg-[#eceef6]" : "h-[21px]",
              i === 3 ? "bg-[#cdbfe0]" : i !== 1 && "bg-[#bfc3d3]"
            )}
          >
            {t.icon}
          </button>
        ))}
        <div className="flex-1 border-b border-[#868a9e]" />
      </div>

      <div className="mt-[3px] mr-1 flex h-[22px] shrink-0 items-center gap-px border border-[#3f4157] bg-linear-to-b from-[#9799ae] to-[#6e7087] text-white">
        <LoftIcon />
        <h2 className="flex-1 font-['DejaVu_Sans_Condensed','DejaVu_Sans',sans-serif] text-[12px] leading-4 font-bold">Schnitt-Ausformung1</h2>
        <button type="button" aria-label="Hilfe" className="w-[21px] text-[13px] leading-4 font-bold">
          ?
        </button>
      </div>

      <div className="flex h-[35px] shrink-0 items-start gap-2 pt-[5px] pl-px">
        <button type="button" aria-label="OK">
          <svg viewBox="0 0 18 18" className="size-[18px]" aria-hidden="true">
            <path d="M1.5 9.5l2.500-2 3 3 7-8 2.500 1-9 12z" fill="#35cc2c" stroke="#14681c" />
          </svg>
        </button>
        <button type="button" aria-label="Abbrechen">
          <svg viewBox="0 0 18 18" className="size-[18px]" aria-hidden="true">
            <path d="M2.5 4L5 2.5l4 4 4-4L15 4l-3.500 5 4 4.500-2.500 2-4-4-4 4-2.500-2 4-4.500z" fill="#e22626" stroke="#7d1616" />
          </svg>
        </button>
      </div>

      <div className="mr-[4px] ml-px font-['Noto_Sans',sans-serif] text-[#3f4150]">
        <Group title="Profile">
          <div className="flex gap-[9px] py-[3px] pr-1.5 pb-[6px] pl-[5px]">
            <div className="flex w-[25px] flex-col gap-[5px]">
              <svg viewBox="0 0 24 24" className="h-[24px] w-[24px]" fill="none" stroke="#e0252c" aria-hidden="true">
                <path d="M1.5 10.5l8-2v7l-8 3z" />
                <ellipse cx="15.5" cy="5" rx="3" ry="4.500" />
              </svg>
              {["Nach oben", "Nach unten"].map((l, i) => (
                <button key={l} type="button" aria-label={l} className="flex h-[24px] w-[25px] items-center justify-center rounded-[3px] border border-[#8d90a0] bg-[#eff0f6]">
                  <svg viewBox="0 0 12 16" className={clsx("h-4 w-3", i === 1 && "rotate-180")} aria-hidden="true">
                    <path d="M6 1l5.500 6H8v8H4V7H.5z" fill="#111" />
                  </svg>
                </button>
              ))}
            </div>
            <div className="flex h-[81px] flex-1 gap-[2px]">
              <div className="w-[11px] border-t border-[#777] bg-[#80ff00]" />
              <select multiple aria-label="Profile" className="min-w-0 flex-1 overflow-hidden border-2 border-[#63aede] bg-[#cfe3f6] font-['Open_Sans',sans-serif] leading-4 text-black outline-none">
                <option className="h-4 p-0">3D-Skizze1</option>
                <option className="h-4 p-0">Skizze2</option>
              </select>
            </div>
          </div>
        </Group>
        <Group
          title={
            <>
              Beginn/Ende
              <br />
              Zwangsbedingungen
            </>
          }
        />
        <Group title="Leitkurven" />
        <Group title="Mittellinienparameter" />
        <Group title="Skizzierwerkzeuge">
          <div className="flex items-start gap-3 pt-[3px] pb-[7px] pl-[22px]">
            <button type="button" disabled className="h-[23px] w-[87px] rounded-[3px] border border-[#a3a5ab] leading-4 text-[#9b9da4]">
              Skizze ziehen
            </button>
            <svg viewBox="0 0 14 10" className="mt-1 h-[10px] w-[14px]" fill="none" stroke="#777a88" aria-label="Rückgängig">
              <path d="M1.500 1v5h5M2 5.500L5 3q5-3 8 0v3l-3 3" />
            </svg>
          </div>
        </Group>
        <Group title="Optionen">
          <div className="px-1.5 pt-1 pb-[7px]">
            <div className="mb-2.5 leading-[13px]">
              <Check
                on
                label={
                  <>
                    Tangentiale Flächen
                    <br />
                    verschmelzen
                  </>
                }
              />
            </div>
            <div className="mb-2 leading-4">
              <Check label="Ausformung schließen" />
            </div>
            <div className="leading-4">
              <Check on label="Vorschau anzeigen" />
            </div>
          </div>
        </Group>
      </div>
    </aside>
  );
}

function Folder({ children }: { children: ReactNode }) {
  return (
    <svg viewBox="0 0 18 18" className="size-[18px] shrink-0" aria-hidden="true">
      <path d="M.5 1.5h6l1 2h8v12H.500z" fill="#f5cf35" stroke="#9a7800" />
      <path d="M1 5h14" stroke="#fff0a0" />
      {children}
    </svg>
  );
}

const plane = (
  <svg viewBox="0 0 18 18" className="size-[18px] shrink-0" fill="none" stroke="#222" aria-hidden="true">
    <path d="M1.500 8L8 1.500 14.500 8 8 14.500zM0 .500l5 5M11 11.500l4 4.500M5.500 8l3 3M8 5.500l3 3" />
  </svg>
);

const tree = [
  {
    name: "Sensoren",
    icon: (
      <Folder>
        <circle cx="8" cy="9" r="4" fill="#dff0fb" stroke="#2c5f8c" />
        <path d="M6 11l4-4" stroke="#222" />
      </Folder>
    ),
  },
  { name: "Beschriftungen", plus: true, icon: <Folder><path d="M5 13l3-8 3 8M6.500 10.500h3" stroke="#1d3d8f" strokeWidth="1.500" fill="none" /></Folder> },
  { name: "Volumenkörper(1)", plus: true, icon: <Folder><path d="M5.500 5.500h5v5h-5zM7.500 7.500h5v5h-5z" stroke="#222" fill="#ffe56b" /></Folder> },
  {
    name: "Material <nicht festgelegt>",
    icon: (
      <svg viewBox="0 0 18 18" className="size-[18px] shrink-0" aria-hidden="true">
        <circle cx="2.500" cy="2.500" r="2.500" fill="#e2202a" />
        <circle cx="2.500" cy="8" r="2.500" fill="#2b3fd0" />
        <circle cx="2.500" cy="13.500" r="2.500" fill="#22a544" />
        <path d="M7 2.500h8M7 8h8M7 13.500h8" stroke="#333" strokeWidth="1.500" />
      </svg>
    ),
  },
  { name: "Ebene vorne", icon: plane },
  { name: "Ebene oben", icon: plane },
  { name: "Ebene rechts", icon: plane },
  {
    name: "Ursprung",
    icon: (
      <svg viewBox="0 0 18 18" className="size-[18px] shrink-0" fill="none" stroke="#a11422" aria-hidden="true">
        <path d="M5.500 12V1.500M3 4.500l2.500-3 2.500 3M5.500 11.500h8M11 9l3 2.500-3 2.500" />
        <path d="M3.500 9.500l4 4M7.500 9.500l-4 4M5.500 9v5" stroke="#222" />
      </svg>
    ),
  },
  {
    name: "Aufsatz-Linear austragen1",
    plus: true,
    icon: (
      <svg viewBox="0 0 18 18" className="size-[18px] shrink-0" aria-hidden="true">
        <path d="M.500 2.500l2-2h9l2 2v10l-2 2h-9l-2-2z" fill="#f3d23c" stroke="#4a3b00" />
        <path d="M3.500 3.500h9v10h-9z" fill="#ffe98a" stroke="#4a3b00" />
        <path d="M7.500 7.500h5l3 3v5h-6l-2-2z" fill="#2fa637" stroke="#0b4d14" />
        <path d="M9 9l4 4" stroke="#bff0a8" />
      </svg>
    ),
  },
  {
    name: "3D-Skizze1",
    cyan: true,
    icon: (
      <svg viewBox="0 0 18 18" className="size-[18px] shrink-0" fill="none" aria-hidden="true">
        <text x="0" y="6" fontSize="8" fontWeight="700" fill="#1c3ca8" className="font-[Liberation_Sans]">3D</text>
        <path d="M0 9h4M2 9v6h6M12 15h3v-4" stroke="#1c3cd0" strokeWidth="1.500" />
        <path d="M5 12l8-7 2 2-7 6z" fill="#58b4ee" stroke="#1d5fb8" />
      </svg>
    ),
  },
  {
    name: "Skizze2",
    cyan: true,
    icon: (
      <svg viewBox="0 0 18 18" className="size-[18px] shrink-0" fill="none" aria-hidden="true">
        <path d="M6 1H1.500v8q0 5 5 5H15" stroke="#1c2fd0" strokeWidth="2" />
        <path d="M5 9l8-6 2 2-7 5z" fill="#58b4ee" stroke="#1d5fb8" />
      </svg>
    ),
  },
  { name: "Schnitt-Ausformung1", plus: true, muted: true, icon: <LoftIcon muted /> },
];

function Branch({ plus, last }: { plus?: boolean; last?: boolean }) {
  return (
    <svg viewBox="0 0 18 18" className="size-[18px] shrink-0" fill="none" stroke="#7d808c" aria-hidden="true">
      <path d={last ? "M4.5 0v8.5H18" : "M4.5 0v18M4.5 8.5H18"} />
      {plus && (
        <>
          <path d="M.5 4.5h8v8h-8z" fill="#d4d7e0" />
          <path d="M2 8.5h5M4.5 6v5" stroke="#111" />
        </>
      )}
    </svg>
  );
}

function FeatureTree() {
  return (
    <div className="absolute top-[3px] left-[5px] text-black">
      <div className="flex h-[18px] items-center">
        <svg viewBox="0 0 14 18" className="h-[18px] w-[14px] shrink-0" fill="none" stroke="#7d808c" aria-hidden="true">
          <path d="M8 8.5h6M.5 4.5h8v8h-8z" />
          <path d="M2 8.5h5" stroke="#111" />
        </svg>
        <PartIcon />
        <span className="pl-[2px] whitespace-pre">{"Teil1  (Standard<<Standard..."}</span>
      </div>
      <ul className="pl-[15px]">
        {tree.map((n, i) => (
          <li key={n.name} className="flex h-[18px] items-center whitespace-nowrap">
            <Branch plus={n.plus} last={i === tree.length - 1} />
            {n.icon}
            <span className={clsx("pl-[2px]", n.cyan && "text-[#25e4f0]", n.muted && "text-[#7c7f8a]")}>{n.name}</span>
          </li>
        ))}
      </ul>
    </div>
  );
}

function Model() {
  return (
    <svg viewBox="279 58 1153 749" className="h-full w-full" role="img" aria-label="Würfel mit Schnitt-Ausformung">
      <g stroke="#000" strokeLinejoin="round">
        <path d="M823 193.500L637.500 325 658.500 580.500 845 449z" fill="#626674" />
        <path d="M823 193.500L1056 275 1077 530.500 845 449z" fill="#ebeeff" />
        <path d="M845 449l232 81.500L892 662 658.500 580.500z" fill="#5d606b" />
      </g>
      <path d="M828 262l-1 16 13 120z" fill="#3b3d47" stroke="#222" strokeWidth=".5" />
      <path d="M840 398l-33 77 38-26z" fill="#6c6c5c" />
      <path d="M845 449l-38 26 84-10z" fill="#64634f" />
      <path d="M840 398l51 67-46-16z" fill="#f6f7ee" />
      <path d="M840 398l5 51 46 16" fill="none" stroke="#e8cf3a" strokeWidth="2" />
      <path d="M840 398l5 51" stroke="#222" />
      <path d="M807 475l38-26" stroke="#222" />
      <path d="M807 475l38-26" stroke="#d8b640" strokeDasharray="2 2" />
      <path d="M840 398l-33 77 84-10" fill="none" stroke="#a6f81e" strokeWidth="2" />
      <path d="M840 398l51 67" stroke="#a6f81e" strokeWidth="2" strokeDasharray="8 3" />
      <circle cx="840" cy="398.500" r="2.500" fill="#5bea28" />
      <circle cx="891" cy="465" r="3" fill="#5bea28" />
      <circle cx="844.500" cy="448.500" r="3" fill="#d8dac8" stroke="#000" />
      <circle cx="807" cy="475" r="5.500" fill="#12d04c" stroke="#000" />
      <path d="M807 475h5" stroke="#000" />
      <rect x="748.500" y="269.500" width="78" height="14" fill="#e6e9f8" stroke="#33344a" />
      <text x="753" y="281" fontSize="11" fill="#33344a">
        Profil(Skizze2)
      </text>
      {/* Triad */}
      <path d="M320 799v8" stroke="#1c1cc0" strokeWidth="4" />
      <path d="M320 799l12-8" stroke="#135c1f" strokeWidth="4" />
      <path d="M327 787l11-3-4 10z" fill="#1c8a2c" stroke="#0e4a17" />
      <path d="M320 798l15 5" stroke="#8b1119" strokeWidth="4" />
      <path d="M333 799l10 5-2 4h-8z" fill="#c81c26" />
      <text x="336" y="785" fontSize="10" fill="#1a6b28">Y</text>
      <text x="341" y="805" fontSize="9" fill="#d0202a">X</text>
    </svg>
  );
}

export default function App() {
  return (
    <div className="flex h-screen flex-col overflow-hidden bg-[#c4c8d3] font-['Open_Sans',sans-serif] text-[11px]">
      <TitleBar />
      <div className="flex h-[29px] shrink-0 items-center overflow-hidden border-b border-[#a2a6bc] bg-linear-to-b from-[#f0f1fb] via-[#d9dbea] to-[#b9bdd3] pt-[2px]">
        <HBar items={standardTools} name="Standard" />
        <div className="ml-[6px] h-full w-px shrink-0 bg-[#85899f]" />
        <div className="ml-[23px] h-full w-px shrink-0 bg-white" />
        <HBar items={sheetTools} name="Blech" />
      </div>
      <main className="flex min-h-0 flex-1">
        <div className="flex shrink-0 items-start bg-[#bec2d4]">
          <SideBar items={featureTools} name="Features" className="h-full w-[30px] stroke-[1.2] text-[#8d909b]" />
          <SideBar items={sketchTools} name="Skizze" className="h-full w-[31px] stroke-[1.6] text-[#858892]" />
          <SideBar items={surfaceTools} name="Oberflächen" className="w-[29px] border-b border-b-white pb-[6px] stroke-[1.2] text-[#9093a0]" />
        </div>
        <PropertyPanel />
        <div className="relative min-w-0 flex-1">
          <Model />
          <FeatureTree />
          <button
            type="button"
            aria-label="Bereich einklappen"
            className="absolute top-[385px] left-[-2px] flex h-[29px] w-[10px] flex-col items-center justify-around rounded-r-[4px] border border-l-0 border-[#5c5f73] bg-[#e0e2eb] py-[3px]"
          >
            {[0, 1, 2].map((i) => (
              <svg key={i} viewBox="0 0 4 6" className="h-[6px] w-1" aria-hidden="true">
                <path d="M4 0v6L0 3z" fill="#33364a" />
              </svg>
            ))}
          </button>
        </div>
      </main>
    </div>
  );
}
